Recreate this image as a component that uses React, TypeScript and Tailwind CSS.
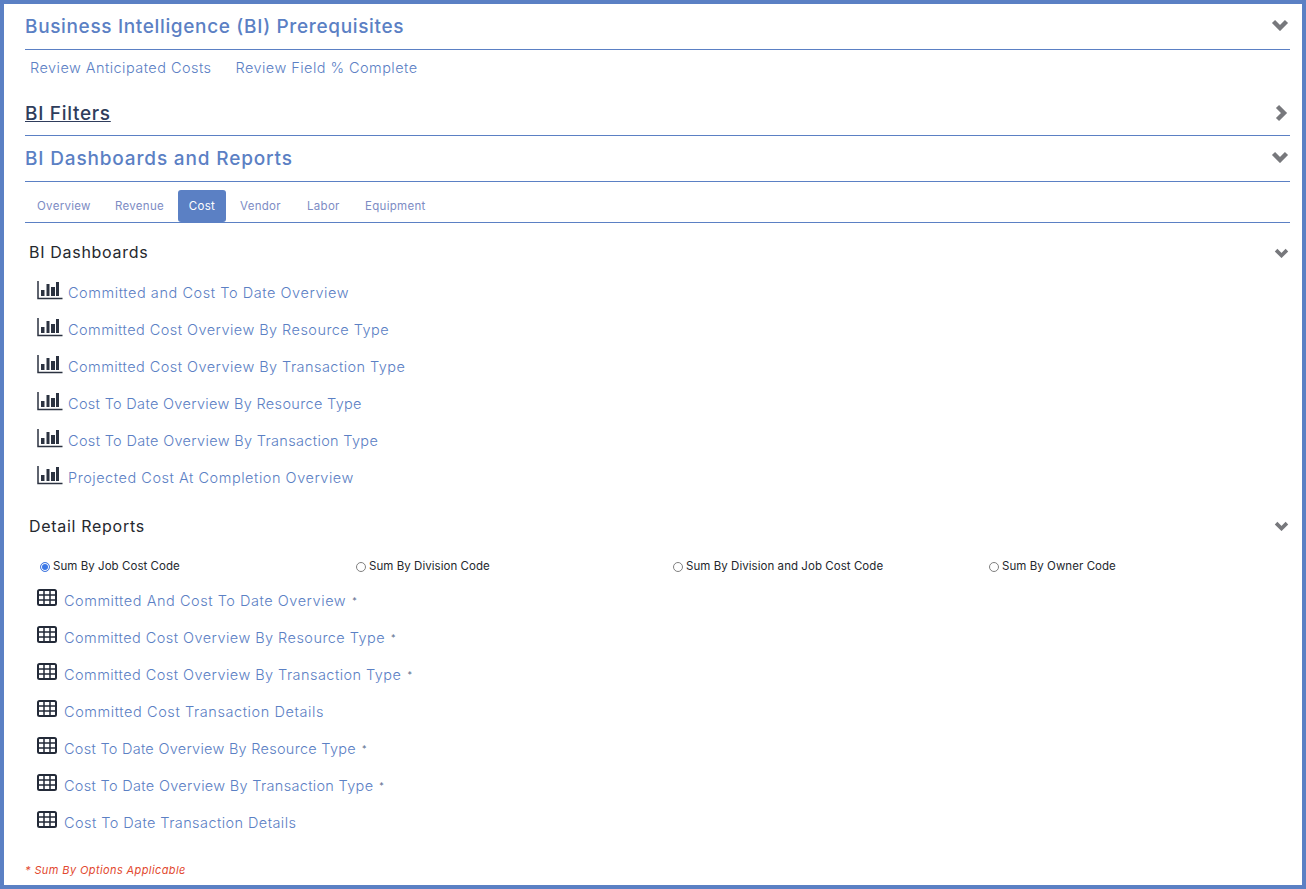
import { FC } from "react";

const dashboards = [
  { name: "Committed and Cost To Date Overview", track: "tracking-[0.56px]" },
  { name: "Committed Cost Overview By Resource Type", track: "tracking-[0.45px]" },
  { name: "Committed Cost Overview By Transaction Type", track: "tracking-[0.45px]" },
  { name: "Cost To Date Overview By Resource Type", track: "tracking-[0.32px]" },
  { name: "Cost To Date Overview By Transaction Type", track: "tracking-[0.33px]" },
  { name: "Projected Cost At Completion Overview", track: "tracking-[0.53px]" },
];

const reports = [
  { name: "Committed And Cost To Date Overview", track: "tracking-[0.54px]", star: true },
  { name: "Committed Cost Overview By Resource Type", track: "tracking-[0.45px]", star: true },
  { name: "Committed Cost Overview By Transaction Type", track: "tracking-[0.45px]", star: true },
  { name: "Committed Cost Transaction Details", track: "tracking-[0.58px]", star: false },
  { name: "Cost To Date Overview By Resource Type", track: "tracking-[0.27px]", star: true },
  { name: "Cost To Date Overview By Transaction Type", track: "tracking-[0.31px]", star: true },
  { name: "Cost To Date Transaction Details", track: "tracking-[0.42px]", star: false },
];

const tabs = [
  { name: "Overview", width: "w-[78px]" },
  { name: "Revenue", width: "w-[75px]" },
  { name: "Cost", width: "w-[48px] mr-[2px]" },
  { name: "Vendor", width: "w-[67px]" },
  { name: "Labor", width: "w-[58px]" },
  { name: "Equipment", width: "w-[75px]" },
];

const sumOptions = [
  { label: "Sum By Job Cost Code", width: "w-[316px]", on: true },
  { label: "Sum By Division Code", width: "w-[317px]", on: false },
  { label: "Sum By Division and Job Cost Code", width: "w-[316px]", on: false },
  { label: "Sum By Owner Code", width: "w-[200px]", on: false },
];

const ChartIcon: FC = () => (
  <svg width="26" height="20" viewBox="0 0 26 20" className="shrink-0 -mt-[1px]">
    <path d="M1 0v17.5h24.5" fill="none" stroke="#2b3240" strokeWidth="1.5" />
    <path d="M4 9h3.5v6H4zM9.500 3h3v12h-3zM14 6h4v9h-4zM19 1h3v14h-3z" fill="#2b3240" />
  </svg>
);

const TableIcon: FC = () => (
  <svg width="20" height="17" viewBox="0 0 20 17" className="shrink-0 -mt-[1px]">
    <rect x="1" y="1" width="18" height="15" rx="1.5" fill="none" stroke="#232a38" strokeWidth="2" />
    <path d="M1 6h18M1 11h18M7 1v15M13 1v15" fill="none" stroke="#232a38" strokeWidth="1.5" />
  </svg>
);

const ChevronDown: FC<{ className?: string; w: number; h: number }> = ({ className, w, h }) => (
  <svg width={w} height={h} viewBox="0 0 18 12" className={className}>
    <path d="M2.500 2.500 9 9l6.500-6.500" fill="none" stroke="#77787c" strokeWidth="4.400" />
  </svg>
);

const ChevronRight: FC = () => (
  <svg width="13" height="18" viewBox="0 0 13 18" className="mr-[2px] mt-[1px]">
    <path d="M2.500 2.500 9 9l-6.500 6.500" fill="none" stroke="#77787c" strokeWidth="4.400" />
  </svg>
);

const SectionHead: FC<{ title: string; titleClass: string; open?: boolean }> = ({ title, titleClass, open = true }) => (
  <div className="h-[46px] flex items-center justify-between border-b border-[#5b80c4]">
    <span className={`text-[19px] font-medium ${titleClass}`}>{title}</span>
    {open ? <ChevronDown w={18} h={12} className="mb-[3px] mr-[1px]" /> : <ChevronRight />}
  </div>
);

const SubHead: FC<{ title: string; titleClass: string }> = ({ title, titleClass }) => (
  <div className="flex items-center justify-between pl-1 h-[24px]">
    <span className={`text-[16px] tracking-[0.7px] text-[#25282e] ${titleClass}`}>{title}</span>
    <ChevronDown w={15} h={10} className="mr-[1px] mb-[1px]" />
  </div>
);

export default function App() {
  return (
    <div
      className="h-[889px] border-4 border-[#5b80c4] bg-white pl-[21px] pr-[12px] overflow-hidden"
      style={{ fontFamily: "Inter, 'Liberation Sans', sans-serif" }}
    >
      <SectionHead title="Business Intelligence (BI) Prerequisites" titleClass="mt-[2px] tracking-[0.65px] text-[#5b80c4]" />
      <div className="h-[40px] flex items-center pl-[5px] pb-[5px] gap-[24px] text-[14.5px] tracking-[0.45px] font-light text-[#5b80c4]">
        <span>Review Anticipated Costs</span>
        <span>Review Field % Complete</span>
      </div>
      <SectionHead title="BI Filters" titleClass="mt-[4px] tracking-[0.7px] underline text-[#2f3d5c]" open={false} />
      <SectionHead title="BI Dashboards and Reports" titleClass="mt-[2px] tracking-[0.84px] text-[#5b80c4]" />

      <div className="h-[41px] flex items-end border-b border-[#5b80c4] text-[11.5px] tracking-[0.3px] text-[#7d8cc4]">
        {tabs.map((t) =>
          t.name === "Cost" ? (
            <span key={t.name} className={`${t.width} h-[32px] pt-[2px] flex items-center justify-center rounded-[3px] bg-[#5b80c4] text-white`}>
              {t.name}
            </span>
          ) : (
            <span key={t.name} className={`${t.width} h-[32px] pl-[12px] pt-[2px] flex items-center`}>
              {t.name}
            </span>
          ),
        )}
      </div>

      <div className="pt-[18px]">
        <SubHead title="BI Dashboards" titleClass="mb-[2px]" />
        <ul className="pt-[17px] pl-[12px]">
          {dashboards.map((d) => (
            <li key={d.name} className="h-[37px] flex items-start gap-[5px]">
              <ChartIcon />
              <span className={`text-[14.5px] ${d.track} font-light text-[#5b80c4] leading-[20px] pt-[1px]`}>{d.name}</span>
            </li>
          ))}
        </ul>
      </div>

      <div className="pt-[10px]">
        <SubHead title="Detail Reports" titleClass="" />
        <div className="flex items-center pt-[13px] pl-[15px] h-[45px] text-[11.5px] tracking-[0.05px] text-[#25282e]">
          {sumOptions.map((o) => (
            <label key={o.label} className={`${o.width} flex items-center gap-[3px]`}>
              <input
                type="radio"
                name="sum"
                defaultChecked={o.on}
                className="appearance-none w-[10px] h-[10px] m-0 rounded-full border border-[#808080] checked:border-[#4a7de0] checked:bg-[#3b78e7] checked:shadow-[inset_0_0_0_1px_white]"
              />
              <span>{o.label}</span>
            </label>
          ))}
        </div>
        <ul className="pt-[7px] pl-[12px]">
          {reports.map((r) => (
            <li key={r.name} className="h-[37px] flex items-start gap-[7px]">
              <TableIcon />
              <span className={`text-[14.5px] ${r.track} font-light text-[#5b80c4] leading-[20px] pt-[1px]`}>{r.name}</span>
              {r.star && <span className="text-[9px] text-[#5b6b8c] ml-[-1px] pt-[4px]">*</span>}
            </li>
          ))}
        </ul>
      </div>

      <p className="pt-[13px] text-[11px] italic tracking-[0.4px] text-[#e2492f]">* Sum By Options Applicable</p>
    </div>
  );
}
